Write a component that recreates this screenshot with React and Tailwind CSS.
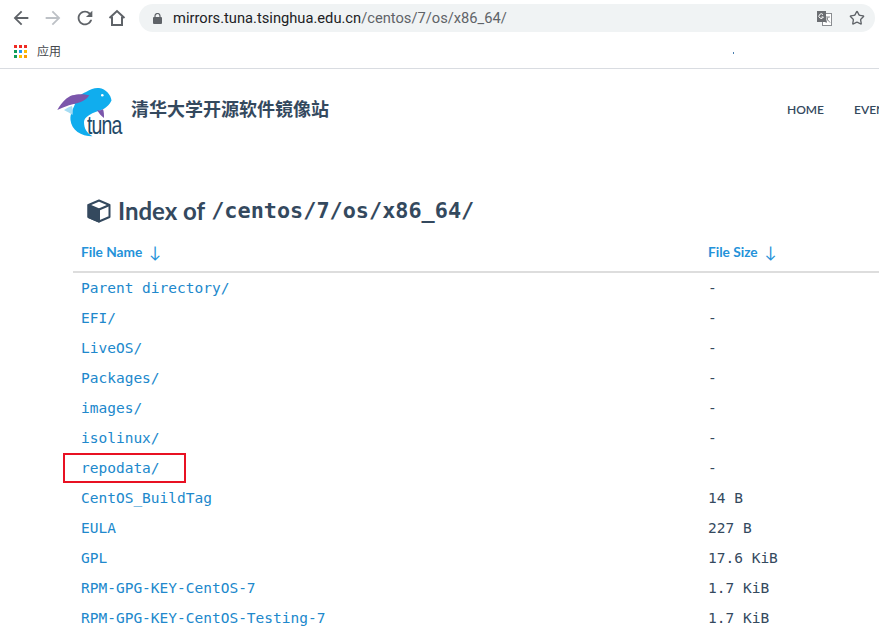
import React from 'react';
import { Star } from 'lucide-react';

const rows = [
    ['Parent directory/', '-'],
    ['EFI/', '-'],
    ['LiveOS/', '-'],
    ['Packages/', '-'],
    ['images/', '-'],
    ['isolinux/', '-'],
    ['repodata/', '-', true],
    ['CentOS_BuildTag', '14 B'],
    ['EULA', '227 B'],
    ['GPL', '17.6 KiB'],
    ['RPM-GPG-KEY-CentOS-7', '1.7 KiB'],
    ['RPM-GPG-KEY-CentOS-Testing-7', '1.7 KiB'],
];

const appColors = ['#ef2b24', '#ef2b24', '#ef2b24', '#0f9d58', '#2196f3', '#fbbc05', '#0f9d58', '#fbbc05', '#fb9c05'];

const MaterialIcon = ({ d, color }) => (
    <svg width="22" height="22" viewBox="0 0 24 24" fill={color}>
        <path d={d} />
    </svg>
);

const HomeIcon = () => (
    <svg width="18" height="18" viewBox="0 0 18 18" fill="none" stroke="#5f6368" strokeWidth="2">
        <path d="M1.5 9 9 2l7.5 7" strokeLinejoin="miter" />
        <path d="M4 7.5V16h10V7.5" />
    </svg>
);

const LockIcon = () => (
    <svg width="9" height="11" viewBox="0 0 9 11">
        <rect x="0" y="4" width="9" height="7" rx="1" fill="#5f6368" />
        <path d="M2 4.5V3a2.5 2.5 0 0 1 5 0v1.5" fill="none" stroke="#5f6368" strokeWidth="1.2" />
    </svg>
);

const TranslateIcon = () => (
    <svg width="15" height="15" viewBox="0 0 15 15">
        <rect x="5.5" y="2.5" width="9" height="12" fill="#fff" stroke="#8a8d91" strokeWidth="1" />
        <path d="M8.5 6h4.5M11 6 9 12M9.5 7.5l3.5 4" stroke="#8a8d91" strokeWidth="1" fill="none" />
        <rect x="0" y="0" width="9" height="11" fill="#6b6e72" />
        <path d="M6 3.6A2.3 2.3 0 1 0 6.4 6H4.5" stroke="#fff" strokeWidth="1" fill="none" />
    </svg>
);

const TunaLogo = () => (
    <div className="relative w-[66px] h-[52px]">
        <svg width="66" height="52" viewBox="0 0 66 52" className="absolute left-0 top-0">
            <path d="M17 18C20 11 24 8 29 6c5-3 9-4.500 13-4 7 1 12 7 12.500 12.500-2 4-4 6-7.500 8.200-5 2.500-11 3.500-15 6.600-3 2-5 4-5 6.700 0 3 .7 6 2 8.300 1.500 2.500 4 4.500 6.500 6-6 0-11-1.500-15-4.300-4-3-6.500-7-7-12-.5-6 2-10 4.500-16Z" fill="#10adee" />
            <path d="M0.300 24C5 16 10 11 15.300 9.300c5-1.500 12-1.500 17 0-2 3-5 5.500-8.600 6.700-4 1.300-8 2-11.700 3.300-4 1.300-8 2.900-11.700 4.700Z" fill="#7b56ab" />
            <path d="M7 24c2-1.500 5-3 8-4 1 3 1 6 .5 9-3-2-5.500-3.500-8.500-5Z" fill="#a5dcf3" />
            <path d="M40 24c2 1 5 0 6-1 1 3 1 6 1 9-3-2-5-5-7-8Z" fill="#7b56ab" />
            <circle cx="45.300" cy="9.300" r="1.300" fill="#fff" />
        </svg>
        <span className="absolute left-[30px] top-[26px] text-[26px] leading-[26px] text-[#1f4a68] font-['Liberation_Sans',sans-serif] tracking-[-1.2px] scale-x-75 origin-left">tuna</span>
    </div>
);

const App = () => {
    return (
        <div className="w-[879px] h-[639px] overflow-hidden bg-white font-['Lato',sans-serif]">
            <div className="h-[35px] flex items-center pt-[1px]">
                <div className="flex items-center gap-[10px] w-[139px] pl-[10px] shrink-0">
                    <MaterialIcon color="#5f6368" d="M20 11H7.830l5.590-5.590L12 4l-8 8 8 8 1.410-1.410L7.830 13H20v-2z" />
                    <MaterialIcon color="#bdc1c6" d="M12 4l-1.410 1.410L16.170 11H4v2h12.170l-5.580 5.590L12 20l8-8z" />
                    <MaterialIcon color="#5f6368" d="M17.650 6.350A7.958 7.958 0 0 0 12 4c-4.420 0-7.990 3.580-7.990 8s3.570 8 7.990 8c3.730 0 6.840-2.550 7.730-6h-2.080A5.990 5.990 0 0 1 12 18c-3.310 0-6-2.690-6-6s2.690-6 6-6c1.660 0 3.140.690 4.220 1.780L13 11h7V4l-2.350 2.350z" />
                    <span className="ml-[2px] flex"><HomeIcon /></span>
                </div>
                <div className="w-[736px] h-[28px] rounded-full bg-[#f0f3f4] flex items-center">
                    <span className="ml-[14px] flex"><LockIcon /></span>
                    <span className="ml-[11px] text-[14.7px] font-['Roboto',sans-serif] text-[#202124]">mirrors.tuna.tsinghua.edu.cn<span className="text-[#5f6368]">/centos/7/os/x86_64/</span></span>
                    <span className="ml-auto flex"><TranslateIcon /></span>
                    <Star size={16} color="#5f6368" strokeWidth={2} className="ml-[17px] mr-[10px]" />
                </div>
            </div>
            <div className="h-[33px] border-b border-[#d9dce1] flex items-center box-content">
                <div className="ml-[14px] -mt-[1px] grid grid-cols-3 gap-[2px] w-[13px]">
                    {appColors.map((c, i) => (
                        <span key={i} className="w-[3px] h-[3px]" style={{ backgroundColor: c }}></span>
                    ))}
                </div>
                <span className="ml-[10px] -mt-[1px] text-[12px] text-[#44484d] font-['Noto_Sans_CJK_SC',sans-serif]">应用</span>
                <span className="ml-[672px] mt-[3px] w-[1px] h-[2px] bg-[#4a7fb0]"></span>
            </div>
            <div className="h-[79px] flex items-start">
                <div className="ml-[57px] mt-[17px] flex items-start">
                    <TunaLogo />
                    <span className="ml-[8px] mt-[9px] text-[18px] leading-[26px] font-bold text-[#34495e] font-['Noto_Sans_CJK_SC',sans-serif]">清华大学开源软件镜像站</span>
                </div>
                <nav className="ml-auto mt-[32px] flex text-[12px] font-semibold text-[#34495e] whitespace-nowrap w-[92px] overflow-hidden">
                    <span>HOME</span>
                    <span className="ml-[30px]">EVENTS</span>
                </nav>
            </div>
            <div className="ml-[73px]">
                <h1 className="mt-[45px] ml-[14px] h-[36px] flex items-center text-[24px] font-bold text-[#34495e] whitespace-nowrap">
                    <svg width="24" height="24" viewBox="0 0 24 24" className="mr-[7px]">
                        <path d="M12 1.500 22.500 6v12L12 22.500 1.500 18V6Z" fill="#fff" stroke="#34495e" strokeWidth="2" strokeLinejoin="round" />
                        <path d="M1.500 6 12 10.500V22.500L1.500 18Z" fill="#34495e" stroke="#34495e" strokeWidth="2" strokeLinejoin="round" />
                        <path d="M12 10.500 22.500 6" stroke="#34495e" strokeWidth="2" />
                    </svg>
                    Index of <span className="ml-[6px] font-['DejaVu_Sans_Mono',monospace] text-[21.85px] font-bold">/centos/7/os/x86_64/</span>
                </h1>
                <div className="mt-[11px] mb-[1px] h-[33px] flex items-start border-b-2 border-[#dddddd] text-[13.7px] font-bold text-[#2492d9]">
                    <span className="w-[635px] pl-[8px] shrink-0 flex items-center">File Name <span className="ml-[7px] text-[16px] font-normal">↓</span></span>
                    <span className="flex items-center">File Size <span className="ml-[7px] text-[16px] font-normal">↓</span></span>
                </div>
                {rows.map(([name, size, marked]) => (
                    <div key={name} className="h-[30px] flex items-center relative">
                        <a className="w-[635px] pl-[8px] shrink-0 text-[14.5px] text-[#2088cc] font-['DejaVu_Sans_Mono',monospace]">{name}</a>
                        <span className="text-[14.5px] text-[#34495e] font-['DejaVu_Sans_Mono',monospace]">{size}</span>
                        {marked && <span className="absolute left-[-10px] top-[-1px] w-[123px] h-[30px] border-2 border-[#e81123]"></span>}
                    </div>
                ))}
            </div>
        </div>
    );
};

export default App;
